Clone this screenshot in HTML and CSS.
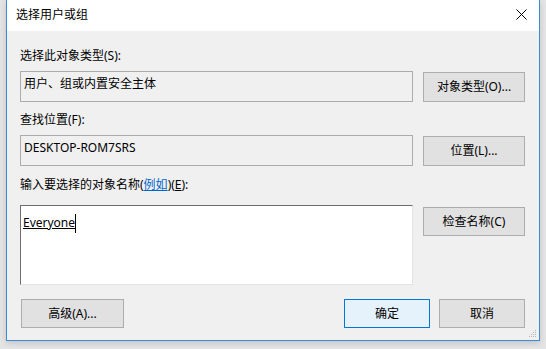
FILE: index.html
```html
<!DOCTYPE html>
<html lang="zh-CN">
<head>
<meta charset="utf-8">
<title>选择用户或组</title>
<link rel="stylesheet" href="styles.css">
</head>
<body>
<div class="desk">
  <div class="window">
    <div class="titlebar">
      <span class="title">选择用户或组</span>
      <span class="close">
        <svg width="11" height="11" viewBox="0 0 11 11"><path d="M0.5 0.5 L10.5 10.5 M10.5 0.5 L0.5 10.5" stroke="#000" stroke-width="1" fill="none"/></svg>
      </span>
    </div>
    <div class="content">
      <div class="label">选择此对象类型(S):</div>
      <div class="row">
        <div class="field">用户、组或内置安全主体</div>
        <div class="btn">对象类型(O)...</div>
      </div>
      <div class="label l2">查找位置(F):</div>
      <div class="row">
        <div class="field">DESKTOP-ROM7SRS</div>
        <div class="btn">位置(L)...</div>
      </div>
      <div class="label l3">输入要选择的对象名称(<span class="link">例如</span>)(<u>E</u>):</div>
      <div class="row top">
        <div class="names"><span class="resolved">Everyone</span><span class="caret"></span></div>
        <div class="btn check">检查名称(C)</div>
      </div>
      <div class="footer">
        <div class="btn wide">高级(A)...</div>
        <div class="spacer"></div>
        <div class="btn small default">确定</div>
        <div class="btn small">取消</div>
      </div>
    </div>
    <svg class="grip" width="9" height="9" viewBox="0 0 9 9">
      <rect x="7" y="1" width="1" height="1" fill="#b8b8b8"/>
      <rect x="5" y="3" width="1" height="1" fill="#b8b8b8"/>
      <rect x="7" y="3" width="1" height="1" fill="#b8b8b8"/>
      <rect x="3" y="5" width="1" height="1" fill="#b8b8b8"/>
      <rect x="5" y="5" width="1" height="1" fill="#b8b8b8"/>
      <rect x="7" y="5" width="1" height="1" fill="#b8b8b8"/>
      <rect x="1" y="7" width="1" height="1" fill="#b8b8b8"/>
      <rect x="3" y="7" width="1" height="1" fill="#b8b8b8"/>
      <rect x="5" y="7" width="1" height="1" fill="#b8b8b8"/>
      <rect x="7" y="7" width="1" height="1" fill="#b8b8b8"/>
    </svg>
  </div>
</div>
</body>
</html>
```
FILE: styles.css
```css
html, body {
  margin: 0;
  padding: 0;
  background: #e4e4e4;
  width: 546px;
  height: 349px;
  overflow: hidden;
}
.desk {
  padding-left: 6px;
  font-family: "Noto Sans", "Noto Sans CJK SC", sans-serif;
  font-size: 12px;
  line-height: 16px;
  color: #000;
}
.window {
  position: relative;
  width: 532px;
  height: 340px;
  border: 1px solid #3d8ad6;
  border-top: none;
  background: #f0f0f0;
  display: flex;
  flex-direction: column;
  box-shadow: 0 2px 6px rgba(0,0,0,0.15);
}
.titlebar {
  height: 31px;
  background: #ffffff;
  display: flex;
  align-items: center;
  padding-left: 9px;
  padding-right: 12px;
}
.title {
  flex: 1;
  margin-top: -2px;
}
.close {
  display: flex;
  margin-top: -3px;
}
.content {
  padding: 17px 14px 0 13px;
  display: flex;
  flex-direction: column;
}
.label {
  height: 16px;
  margin-bottom: 7px;
}
.l2 { margin-top: 10px; }
.l3 { margin-top: 11px; margin-bottom: 12px; }
.link {
  color: #0066cc;
  text-decoration: underline;
}
.row {
  display: flex;
  align-items: flex-end;
  gap: 10px;
}
.row.top { align-items: flex-start; }
.field {
  box-sizing: border-box;
  width: 393px;
  height: 31px;
  border: 1px solid #adadad;
  padding: 4px 3px;
}
.names {
  box-sizing: border-box;
  width: 393px;
  height: 80px;
  background: #fff;
  border-top: 1px solid #6e6e6e;
  border-left: 1px solid #6e6e6e;
  border-right: 1px solid #e3e3e3;
  border-bottom: 1px solid #e3e3e3;
  padding: 9px 2px;
  display: flex;
  align-items: flex-start;
}
.resolved {
  text-decoration: underline;
}
.caret {
  display: inline-block;
  width: 1px;
  height: 19px;
  margin-top: -1px;
  background: #000;
}
.btn {
  box-sizing: border-box;
  width: 102px;
  height: 30px;
  background: #e1e1e1;
  border: 1px solid #adadad;
  display: flex;
  align-items: center;
  justify-content: center;
}
.btn.check {
  margin-top: 2px;
  height: 29px;
}
.footer {
  margin-top: 14px;
  display: flex;
  gap: 9px;
  padding-left: 1px;
}
.spacer { flex: 1; }
.btn.wide { width: 103px; height: 29px; }
.btn.small { width: 86px; height: 29px; }
.btn.default {
  background: #e5f1fb;
  border-color: #0078d7;
}
.grip {
  position: absolute;
  right: 2px;
  bottom: 2px;
}
```
